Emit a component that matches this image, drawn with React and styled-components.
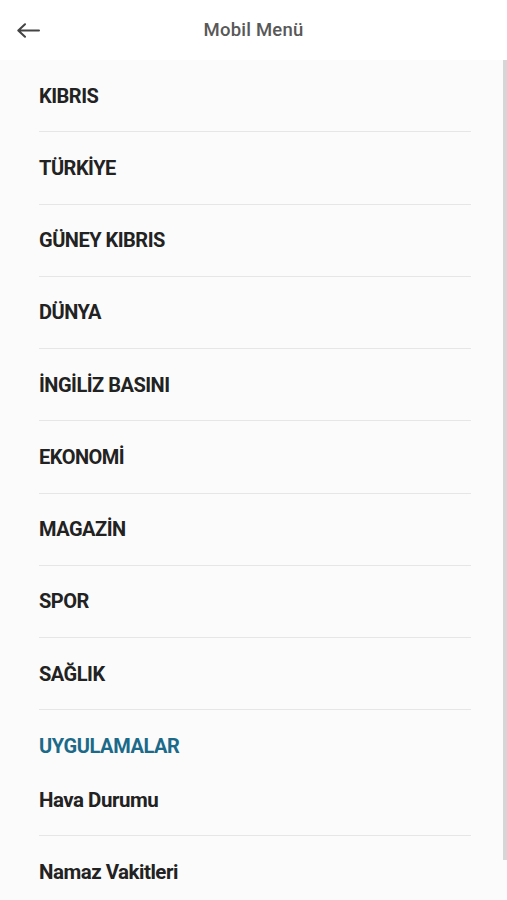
import React from 'react';
import styled, { createGlobalStyle } from 'styled-components';

const GlobalStyle = createGlobalStyle`
  html, body {
    margin: 0;
    padding: 0;
    background: #ffffff;
  }
  body {
    font-family: 'Roboto', 'Liberation Sans', sans-serif;
    color: #222;
  }
`;

const Page = styled.div`
  width: 507px;
  height: 900px;
  display: flex;
  flex-direction: column;
  overflow: hidden;
`;

const Header = styled.header`
  height: 60px;
  flex: none;
  display: grid;
  grid-template-columns: 60px 1fr 60px;
  align-items: center;
  background: #fff;
`;

const BackButton = styled.button`
  border: none;
  background: transparent;
  padding: 0 0 0 16px;
  height: 60px;
  display: flex;
  align-items: center;
  color: #444;
  cursor: pointer;
`;

const Title = styled.h1`
  margin: 0;
  text-align: center;
  font-size: 18.5px;
  font-weight: 500;
  color: #585858;
  letter-spacing: 0.2px;
`;

const Panel = styled.nav`
  position: relative;
  flex: 1;
  background: #fbfbfb;
  padding: 0 36px 0 39px;
`;

const Scrollbar = styled.div`
  position: absolute;
  top: 0;
  right: 0;
  width: 4px;
  height: 800px;
  background: #d6d6d6;
`;

const List = styled.ul`
  list-style: none;
  margin: 0;
  padding: 0;
`;

const Item = styled.li`
  height: 72.25px;
  display: flex;
  align-items: center;
  border-bottom: ${p => (p.last ? 'none' : '1px solid #e6e6e6')};
  box-sizing: border-box;
  font-size: 20px;
  font-weight: 700;
  letter-spacing: -0.5px;
  color: #222;
`;

const SectionTitle = styled.div`
  padding-top: 24px;
  height: 55px;
  box-sizing: border-box;
  font-size: 20px;
  font-weight: 700;
  letter-spacing: -0.4px;
  color: #1b6a89;
`;

const AppItem = styled(Item)`
  font-size: 20.5px;
  height: 71px;
`;

const categories = [
  'KIBRIS',
  'TÜRKİYE',
  'GÜNEY KIBRIS',
  'DÜNYA',
  'İNGİLİZ BASINI',
  'EKONOMİ',
  'MAGAZİN',
  'SPOR',
  'SAĞLIK',
];

const apps = ['Hava Durumu', 'Namaz Vakitleri'];

const BackArrow = () => (
  <svg width="24" height="15" viewBox="0 0 24 15" fill="none">
    <path
      d="M23 7.5H2.5M9 1.2L2.3 7.5L9 13.8"
      stroke="currentColor"
      strokeWidth="2"
      strokeLinecap="round"
      strokeLinejoin="round"
    />
  </svg>
);

const App = () => {
  return (
    <Page>
      <GlobalStyle />
      <Header>
        <BackButton aria-label="Geri">
          <BackArrow />
        </BackButton>
        <Title>Mobil Menü</Title>
        <span />
      </Header>
      <Panel>
        <List>
          {categories.map(c => (
            <Item key={c}>{c}</Item>
          ))}
        </List>
        <SectionTitle>UYGULAMALAR</SectionTitle>
        <List>
          {apps.map((a, i) => (
            <AppItem key={a} last={i === apps.length - 1 ? 1 : 0}>
              {a}
            </AppItem>
          ))}
        </List>
        <Scrollbar />
      </Panel>
    </Page>
  );
};

export default App;
